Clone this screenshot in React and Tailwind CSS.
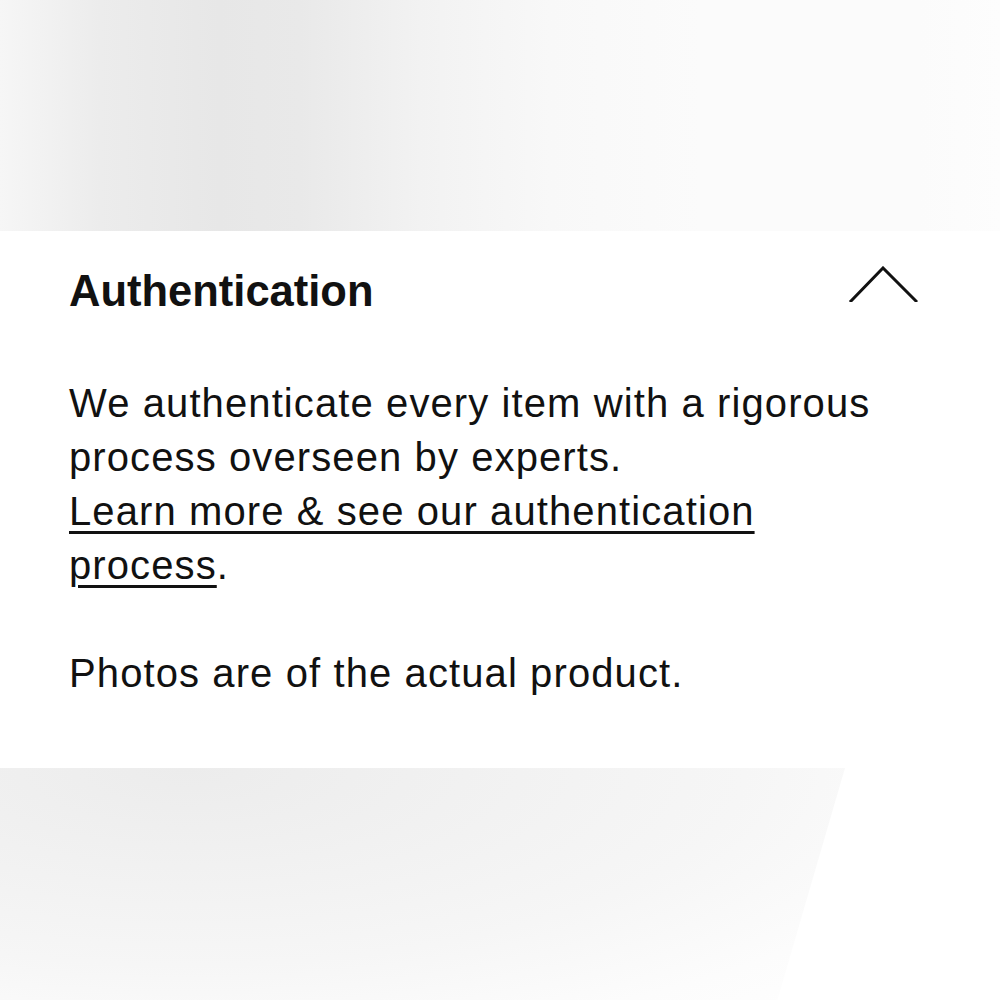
import React from 'react';

const ChevronUp = () => (
    <svg width="70" height="36" viewBox="0 0 70 36" fill="none" className="shrink-0">
        <path d="M3 35 L35 2 L68 35" stroke="#111" strokeWidth="3" strokeLinecap="square" strokeLinejoin="miter" />
    </svg>
);

function App() {
    return (
        <div className="w-[1000px] h-[1000px] flex flex-col bg-white text-[#111] font-['Liberation_Sans',Arial,sans-serif] overflow-hidden">
            {/* blurred product photo above */}
            <div className="h-[231px] shrink-0 bg-[linear-gradient(90deg,#f6f6f6_0%,#ececec_10%,#e7e7e7_22%,#e9e9e9_30%,#f2f2f2_42%,#f8f8f8_55%,#fbfbfb_70%,#fbfbfb_92%,#fdfdfd_100%)]" />

            {/* accordion panel */}
            <div className="h-[537px] shrink-0 bg-white pl-[69px] pt-[34px]">
                <div className="flex justify-between items-start pr-[82px]">
                    <h2 className="text-[43.5px] leading-[52px] font-bold">Authentication</h2>
                    <div className="pt-[1px]">
                        <ChevronUp />
                    </div>
                </div>

                <div className="mt-[59px] w-[830px] text-[40px] leading-[54px] tracking-[1.1px]">
                    <p>
                        We authenticate every item with a rigorous process overseen by experts.
                        <br />
                        <a href="#" className="underline decoration-[2.5px] underline-offset-[6px]">
                            Learn more &amp; see our authentication process
                        </a>
                        <span>.</span>
                    </p>
                    <p className="mt-[54px]">Photos are of the actual product.</p>
                </div>
            </div>

            {/* blurred photo below */}
            <div className="flex-1 flex">
                <div className="w-[845px] bg-[radial-gradient(ellipse_at_22%_0%,#ececec_0%,#f1f1f1_30%,#f6f6f6_60%,#fcfcfc_85%,#fefefe_100%)] [clip-path:polygon(0_0,100%_0,92%_100%,0_100%)]" />
                <div className="flex-1 bg-white" />
            </div>
        </div>
    );
}

export default App;
